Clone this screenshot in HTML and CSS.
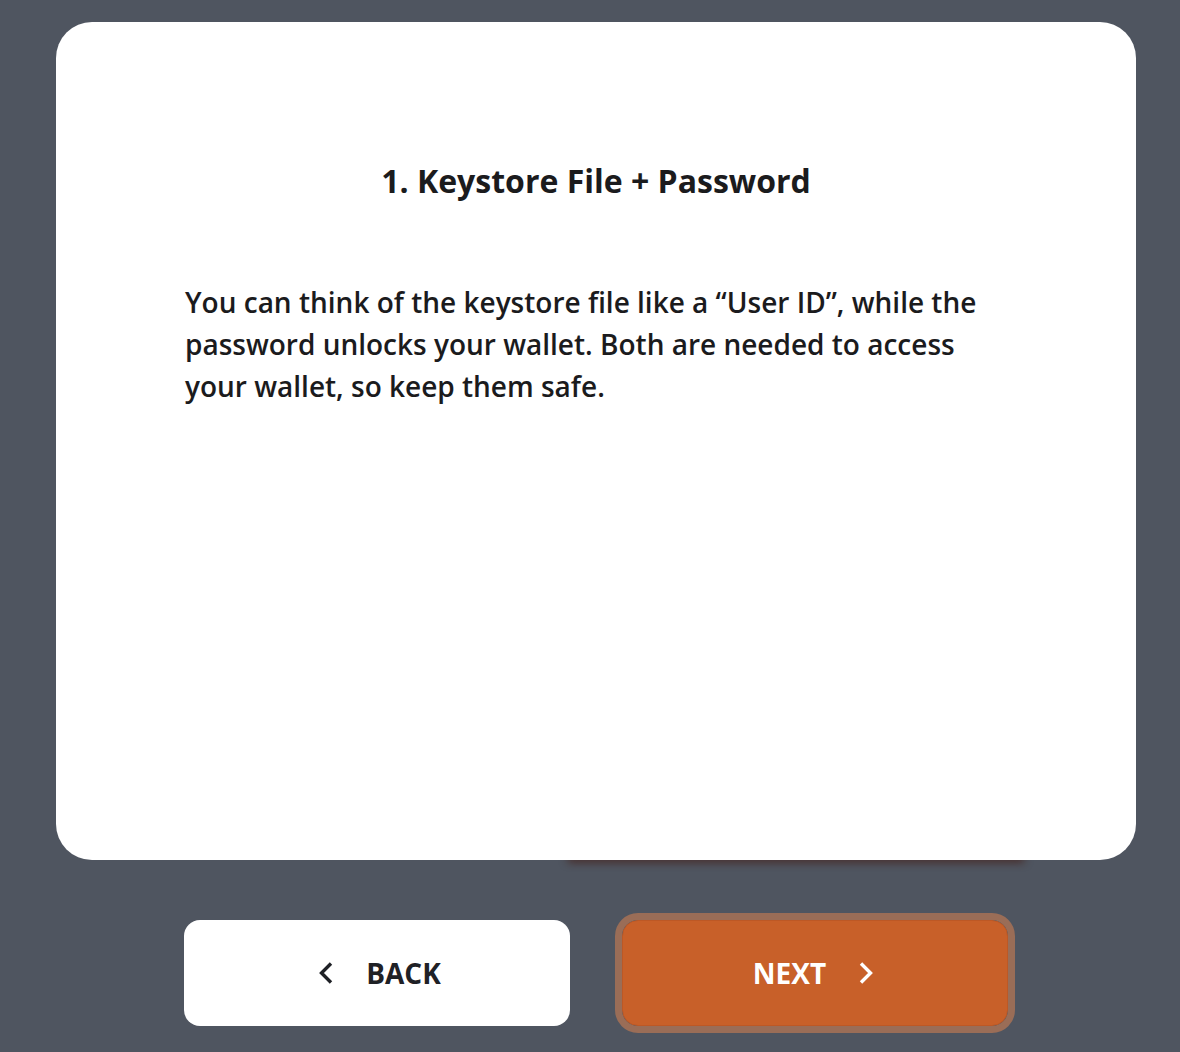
FILE: index.html
```html
<!DOCTYPE html>
<html lang="en">
<head>
<meta charset="utf-8">
<title>Keystore File + Password</title>
<link rel="stylesheet" href="styles.css">
</head>
<body>
<main class="page">
  <section class="card">
    <h1 class="title">1. Keystore File + Password</h1>
    <p class="text">You can think of the keystore file like a “User ID”, while the password unlocks your wallet. Both are needed to access your wallet, so keep them safe.</p>
  </section>
  <div class="actions">
    <button class="btn btn-back" type="button">
      <svg class="chev" width="16" height="24" viewBox="0 0 16 24" aria-hidden="true"><path d="M14 2.5 L4.5 12 L14 21.5" fill="none" stroke="currentColor" stroke-width="3.4"/></svg>
      <span>BACK</span>
    </button>
    <button class="btn btn-next" type="button">
      <span>NEXT</span>
      <svg class="chev" width="16" height="24" viewBox="0 0 16 24" aria-hidden="true"><path d="M2 2.5 L11.5 12 L2 21.5" fill="none" stroke="currentColor" stroke-width="3.4"/></svg>
    </button>
  </div>
</main>
</body>
</html>
```
FILE: styles.css
```css
html {
  background: #4f5560;
}
body {
  margin: 0;
  padding: 0;
  font-family: "Open Sans", "Noto Sans", "DejaVu Sans", sans-serif;
}
.page {
  width: 1180px;
  height: 1052px;
  overflow: hidden;
  padding-top: 22px;
  box-sizing: border-box;
}
.card {
  position: relative;
  margin-left: 56px;
  width: 1080px;
  height: 838px;
  background: #ffffff;
  border-radius: 36px;
  box-sizing: border-box;
  padding: 137px 129px 0 129px;
}
.card::after {
  content: "";
  position: absolute;
  left: 512px;
  right: 112px;
  bottom: 4px;
  height: 6px;
  box-shadow: 0 6px 8px rgba(68, 30, 22, 0.95);
  z-index: -1;
}
.title {
  margin: 0;
  text-align: center;
  font-size: 32px;
  font-weight: 700;
  line-height: 44px;
  color: #1b1b1d;
}
.text {
  margin: 78px 0 0 0;
  font-size: 28px;
  font-weight: 600;
  line-height: 42px;
  color: #1b1b1d;
}
.actions {
  display: flex;
  gap: 52px;
  margin-top: 60px;
  padding-left: 184px;
}
.btn {
  display: flex;
  align-items: center;
  justify-content: center;
  gap: 33px;
  width: 386px;
  height: 106px;
  border-radius: 16px;
  font-family: inherit;
  font-size: 28px;
  font-weight: 700;
  cursor: pointer;
  padding: 0;
}
.btn-back {
  background: #ffffff;
  color: #1f2126;
  border: none;
  padding-left: 4px;
}
.btn-next {
  background: #c86029;
  color: #ffffff;
  border: 1px solid #bd5825;
  outline: 7px solid #9a6d57;
  outline-offset: 0;
  padding-right: 2px;
}
.chev {
  display: block;
}
```
